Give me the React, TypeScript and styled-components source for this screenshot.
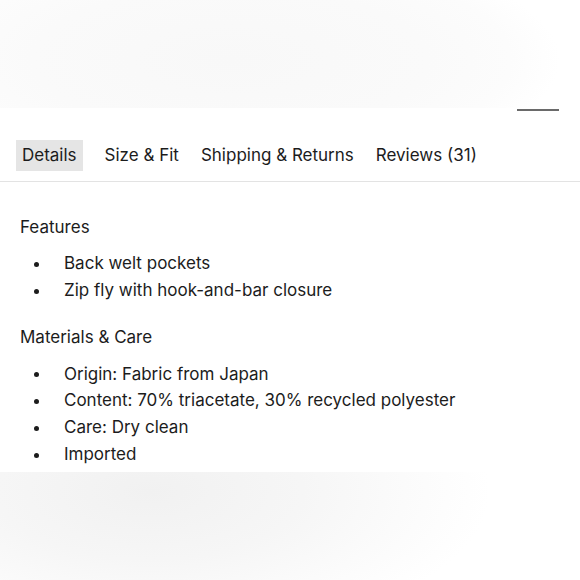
import React from 'react';
import styled, { createGlobalStyle } from 'styled-components';

const GlobalStyle = createGlobalStyle`
  html, body {
    margin: 0;
    padding: 0;
    background: #fff;
  }
  body {
    font-family: Inter, 'Noto Sans', sans-serif;
    color: #1c1c1c;
  }
`;

const Page = styled.div`
  width: 580px;
  height: 580px;
  display: flex;
  flex-direction: column;
  overflow: hidden;
`;

const Blur = styled.div<{ bottom?: boolean }>`
  flex: ${({ bottom }) => (bottom ? '1' : '0 0 108px')};
  background: ${({ bottom }) =>
    bottom
      ? 'radial-gradient(ellipse 340px 150px at 150px 20px, #f1f1f1 0%, #f6f6f6 45%, #fbfbfb 75%, #fff 100%)'
      : 'radial-gradient(ellipse 330px 120px at 230px 60px, #f8f8f8 0%, #fafafa 60%, #fcfcfc 85%, #fff 100%)'};
`;

const Panel = styled.section`
  background: #fff;
  display: flex;
  flex-direction: column;
  height: 364px;
`;

const Indicator = styled.div`
  align-self: flex-end;
  width: 42px;
  height: 2px;
  margin: 1px 21px 0 0;
  background: #6a6a6a;
`;

const TabBar = styled.nav`
  display: flex;
  gap: 10px;
  padding: 29px 0 10px 16px;
  border-bottom: 1px solid #e3e3e3;
`;

const Tab = styled.button<{ active?: boolean }>`
  border: none;
  font: inherit;
  font-size: 17px;
  line-height: 31px;
  height: 31px;
  padding: 0 6px;
  margin-right: ${({ active }) => (active ? '6px' : '0')};
  color: #1c1c1c;
  background: ${({ active }) => (active ? '#e5e5e5' : 'transparent')};
  cursor: pointer;
`;

const Content = styled.div`
  padding: 32px 20px 0;
`;

const Heading = styled.h3`
  margin: 0;
  font-size: 17px;
  font-weight: 400;
  line-height: 27px;
`;

const List = styled.ul<{ last?: boolean }>`
  list-style: none;
  margin: ${({ last }) => (last ? '10px 0 0' : '9px 0 20px')};
  padding: 0;
`;

const Item = styled.li`
  display: flex;
  align-items: center;
  font-size: 17px;
  line-height: 26.8px;
`;

const Dot = styled.span`
  width: 5px;
  height: 5px;
  border-radius: 50%;
  background: #1c1c1c;
  margin: 2px 25px 0 14px;
`;

const sections = [
  {
    title: 'Features',
    items: ['Back welt pockets', 'Zip fly with hook-and-bar closure'],
  },
  {
    title: 'Materials & Care',
    items: [
      'Origin: Fabric from Japan',
      'Content: 70% triacetate, 30% recycled polyester',
      'Care: Dry clean',
      'Imported',
    ],
  },
];

const tabs = ['Details', 'Size & Fit', 'Shipping & Returns', 'Reviews (31)'];

export default function App() {
  return (
    <Page>
      <GlobalStyle />
      <Blur />
      <Panel>
        <Indicator />
        <TabBar>
          {tabs.map((t, i) => (
            <Tab key={t} active={i === 0}>
              {t}
            </Tab>
          ))}
        </TabBar>
        <Content>
          {sections.map((s, i) => (
            <div key={s.title}>
              <Heading>{s.title}</Heading>
              <List last={i === sections.length - 1}>
                {s.items.map((it) => (
                  <Item key={it}>
                    <Dot />
                    {it}
                  </Item>
                ))}
              </List>
            </div>
          ))}
        </Content>
      </Panel>
      <Blur bottom />
    </Page>
  );
}
